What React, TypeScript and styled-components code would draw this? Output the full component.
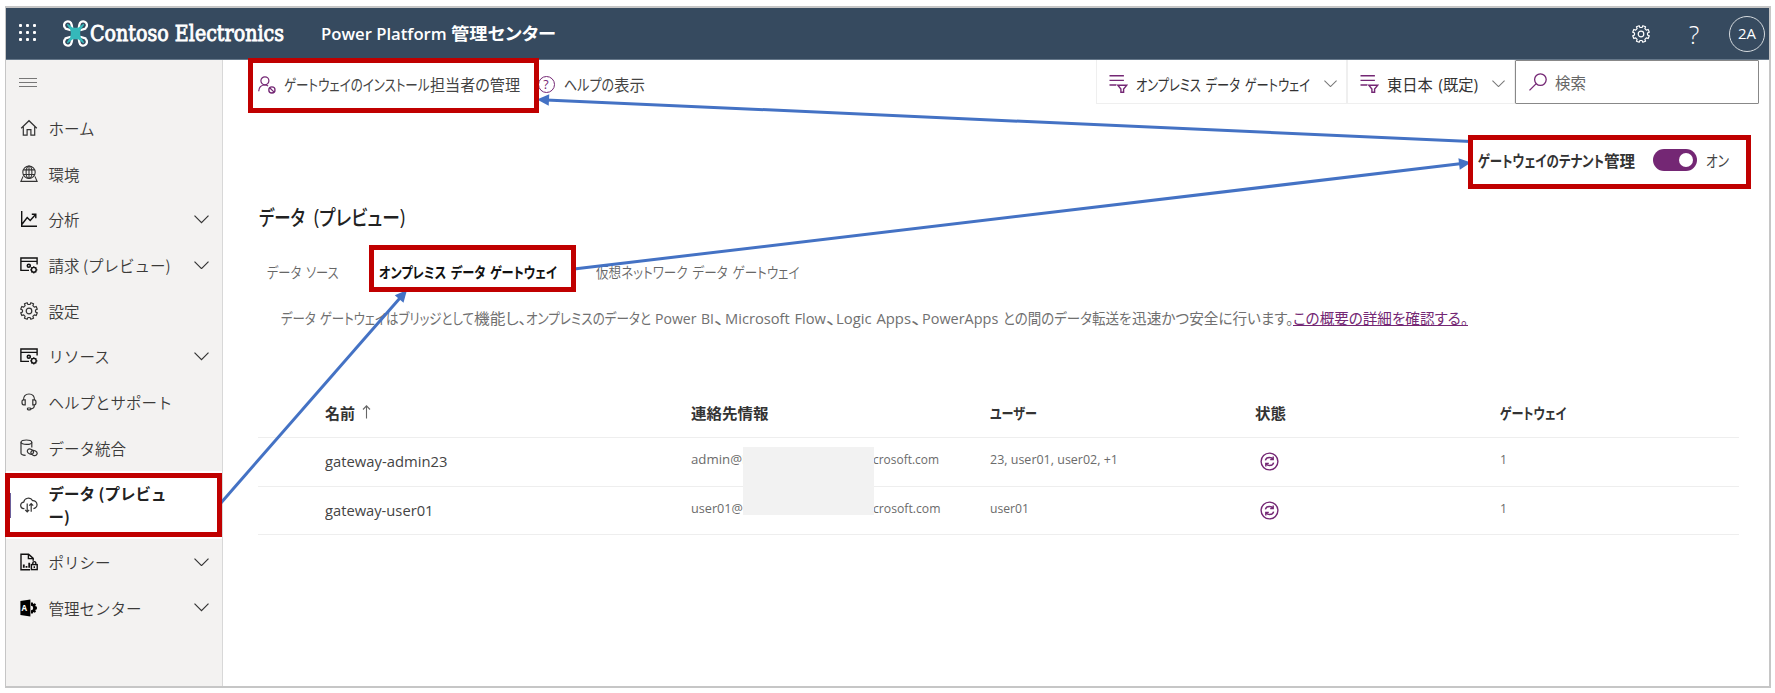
import React, { useLayoutEffect, useRef } from "react";
import styled, { createGlobalStyle, css } from "styled-components";

const Global = createGlobalStyle`
  *, *::before, *::after { box-sizing: border-box; }
  body {
    margin: 0;
    background: #fff;
    font-family: "Open Sans", "Noto Sans CJK JP", sans-serif;
    color: #444;
  }
  svg { display: block; flex: none; }
`;

const purple = "#742774";
const red = "#c00000";
const blue = "#4472c4";

/* ---------- text set to a given measure ---------- */

const FitOuter = styled.span<{ $w: number }>`
  display: inline-block;
  flex: none;
  width: ${(p) => p.$w}px;
  white-space: pre;
  font-feature-settings: "palt";
`;
const FitInner = styled.span`
  display: inline-block;
  transform-origin: 0 50%;
`;

function Fit({ w, children }: { w: number; children: string }) {
  const ref = useRef<HTMLSpanElement>(null);
  useLayoutEffect(() => {
    const fit = () => {
      const el = ref.current;
      if (!el) return;
      el.style.transform = "none";
      const natural = el.getBoundingClientRect().width;
      if (natural > 0) el.style.transform = `scaleX(${w / natural})`;
    };
    fit();
    document.fonts.ready.then(fit);
  }, [w, children]);
  return (
    <FitOuter $w={w}>
      <FitInner ref={ref}>{children}</FitInner>
    </FitOuter>
  );
}

/* ---------- icons ---------- */

const gearPath = (c: number, outer: number, inner: number, teeth = 8) => {
  const pts: string[] = [];
  const step = (Math.PI * 2) / teeth;
  for (let i = 0; i < teeth; i++) {
    const a = i * step - Math.PI / 2 + step / 2;
    [
      [-0.3, inner],
      [-0.22, outer],
      [0.22, outer],
      [0.3, inner],
    ].forEach(([o, r]) => {
      pts.push(`${(c + Math.cos(a + o * step) * r).toFixed(2)} ${(c + Math.sin(a + o * step) * r).toFixed(2)}`);
    });
  }
  return `M${pts.join("L")}Z`;
};

const Glyph = ({ children, size = 18, sw = 1.2, color = "#333" }: { children: React.ReactNode; size?: number; sw?: number; color?: string }) => (
  <svg width={size} height={size} viewBox="0 0 18 18" fill="none" stroke={color} strokeWidth={sw}>
    {children}
  </svg>
);

const Gear = ({ color, size }: { color?: string; size?: number }) => (
  <Glyph color={color} size={size}>
    <path d={gearPath(9, 8.5, 6.6)} strokeLinejoin="round" />
    <circle cx="9" cy="9" r="2.8" />
  </Glyph>
);

const HomeIcon = () => (
  <Glyph>
    <path d="M1.2 9.3 9 1.7l7.8 7.6M3.3 7.6v8.6h3.8v-5.6h3.8v5.6h3.8V7.6" />
  </Glyph>
);
const GlobeIcon = () => (
  <Glyph sw={1.1}>
    <circle cx="9" cy="7.2" r="6.2" />
    <ellipse cx="9" cy="7.2" rx="2.9" ry="6.2" />
    <path d="M3.4 4.9h11.2M3.4 9.5h11.2M3.1 11.4.9 16.4h16.2l-2.2-5M9 1v12.4" />
  </Glyph>
);
const ChartIcon = () => (
  <Glyph color="#111" sw={1.4}>
    <path d="M1.7 1v15.3H17M2 14.3l5.2-6.8 3 3 5.4-6M11.8 4.2h4v4" />
  </Glyph>
);
const WindowGearIcon = () => (
  <Glyph color="#111" sw={1.4}>
    <path d="M9 14.4H.9V2h16.2v6.6M.9 5.4h16.2" />
    <circle cx="8.8" cy="9.8" r="1.5" strokeWidth="1.6" />
    <circle cx="13.8" cy="13.8" r="2.4" strokeWidth="1.4" />
    <path d="M13.8 10.3v1.2M13.8 16.2v1.2M10.3 13.8h1.2M16.2 13.8h1.2M11.3 11.3l.9.9M15.4 15.4l.9.9M16.3 11.3l-.9.9M12.2 15.4l-.9.9" strokeWidth="1.2" />
  </Glyph>
);
const HeadsetIcon = () => (
  <Glyph>
    <path d="M3.4 7.4C3.4 3.4 5.4 1 9 1s5.6 2.4 5.6 6.4M5.2 6.8H3.6c-1.2 0-1.6.8-1.6 2.4s.4 2.6 1.6 2.6h1.6zM12.8 6.8h1.6c1.2 0 1.6.8 1.6 2.4s-.4 2.6-1.6 2.6h-1.6zM14.4 11.8c0 2.8-1.2 4-3.6 4" />
    <rect x="7.4" y="15" width="3.4" height="1.8" rx=".8" />
  </Glyph>
);
const DbLinkIcon = () => (
  <Glyph>
    <ellipse cx="6.4" cy="3.2" rx="5.4" ry="2.2" />
    <path d="M1 3.2v11c0 1.1 1.9 1.9 4.6 2.1M11.8 3.2v5.2" />
    <ellipse cx="10.4" cy="12.6" rx="3.2" ry="2.4" transform="rotate(25 10.4 12.6)" />
    <ellipse cx="14" cy="14" rx="3.2" ry="2.4" transform="rotate(25 14 14)" />
  </Glyph>
);
const CloudIcon = () => (
  <Glyph>
    <path d="M4.4 12.6H4A3.2 3.2 0 0 1 3.7 6.2 4.8 4.8 0 0 1 12.6 4.6 4 4 0 1 1 13.4 12.6" />
    <path d="M7.2 7.4v8.4M5.2 13.8l2 2 2-2M11.2 15.8V7.6M9.2 9.6l2-2 2 2" />
  </Glyph>
);
const PolicyIcon = () => (
  <Glyph color="#111" sw={1.4}>
    <path d="M10 16.8H1V1.2h7.6l4.6 4.2v2.4M8.4 1.4v4.2h4.6" />
    <path d="M3.8 11.6v3.2M6.5 13v1.8M9.2 9.8v5" strokeWidth="1.8" />
    <rect x="11.4" y="11.6" width="5.8" height="5" />
    <path d="M12.8 11.4v-1.3a1.5 1.5 0 0 1 3 0v1.3M14.3 13.2v1.8" />
  </Glyph>
);
const AdminBadge = styled.span`
  position: relative;
  display: flex;
  align-items: center;
  width: 18px;
  height: 18px;
`;
const AdminLetter = styled.span`
  position: absolute;
  left: 2px;
  top: 4px;
  color: #fff;
  font: 700 8px/10px "Open Sans", sans-serif;
`;
const AdminIcon = () => (
  <AdminBadge>
    <svg width="18" height="18" viewBox="0 0 18 18">
      <path d="M.4 2 10.4.6v17L.4 16Z" fill="#000" />
      <path d="M11 3.4h1.8l.4 1.6 1.6-.8 1.2 1.2-.8 1.6 1.7.7v2.6l-1.7.7.8 1.6-1.2 1.2-1.6-.8-.4 1.6H11v-3.4a2.2 2.2 0 0 0 0-4.4Z" fill="#000" />
    </svg>
    <AdminLetter>A</AdminLetter>
  </AdminBadge>
);
const Chevron = ({ w = 15, color = "#333" }: { w?: number; color?: string }) => (
  <svg width={w} height={w * 0.58} viewBox="0 0 15 8.7" fill="none" stroke={color} strokeWidth="1.2">
    <path d="M.5.6l7 7 7-7" />
  </svg>
);
const PersonBlockIcon = () => (
  <Glyph color={purple} sw={1.2}>
    <circle cx="6.9" cy="4.8" r="4" />
    <path d="M.7 15.2c.2-3.6 2.6-6.2 6.2-6.2 1.4 0 2.4.4 3.2.9" />
    <circle cx="13.9" cy="13.9" r="3.1" strokeWidth="1.3" />
    <path d="m11.7 11.7 4.4 4.4" strokeWidth="1.3" />
  </Glyph>
);
const FilterIcon = () => (
  <svg width="19" height="20" viewBox="0 0 19 20" fill="none" stroke={purple} strokeWidth="1.4">
    <path d="M.5 1.8h14.4M.5 6.4h14.4M.5 11h6.8M8.8 11.2h9L14.6 15v3.2h-2.7V15Z" />
  </svg>
);
const SearchIcon = () => (
  <Glyph color={purple} sw={1.3}>
    <circle cx="11.4" cy="6.6" r="5.8" />
    <path d="M7.2 10.6.5 17.4" />
  </Glyph>
);
const SyncIcon = () => (
  <svg width="19" height="19" viewBox="0 0 19 19" fill="none" stroke={purple} strokeWidth="1.4">
    <circle cx="9.5" cy="9.5" r="8.4" />
    <path d="M5.4 8.4c.4-1.8 2-2.9 4-2.9 1.5 0 2.7.6 3.4 1.6M13.6 10.6c-.4 1.8-2 2.9-4 2.9-1.5 0-2.7-.6-3.4-1.6M13.2 4.6v3h-3M5.8 14.4v-3h3" />
  </svg>
);
const DroneLogo = () => (
  <svg width="25" height="27" viewBox="0 0 25 27" fill="none">
    <g stroke="#fff" strokeWidth="2.3" strokeLinecap="round">
      <path d="M1.9 7.6A3.8 3.8 0 1 1 8.6 4.6L9.4 9M2.6 8.6 7 10" />
      <path d="M23.1 7.6A3.8 3.8 0 1 0 16.4 4.6L15.6 9M22.4 8.6 18 10" />
      <path d="M1.9 19.4A3.8 3.8 0 1 0 8.6 22.4L9.4 18M2.6 18.4 7 17" />
      <path d="M23.1 19.4A3.8 3.8 0 1 1 16.4 22.4L15.6 18M22.4 18.4 18 17" />
    </g>
    <path
      d="M4.6 4.6 9.4 8.4h6.2l4.8-3.8-3.4 5c-.8 2.4-.8 5.4 0 7.8l3.4 5-4.8-3.8H9.4l-4.8 3.8 3.4-5c.8-2.4.8-5.4 0-7.8Z"
      fill="#35b8ba" stroke="#35b8ba" strokeWidth="1.4" strokeLinejoin="round"
    />
  </svg>
);

/* ---------- shell ---------- */

const Page = styled.div`
  position: relative;
  width: 1775px;
  height: 693px;
  padding: 6px 4px 5px 5px;
  overflow: hidden;
`;
const Frame = styled.div`
  display: flex;
  flex-direction: column;
  height: 682px;
  border: 2px solid #c6c6c6;
  border-left-width: 1px;
`;
const Header = styled.header`
  display: flex;
  align-items: center;
  flex: none;
  height: 52px;
  padding: 0 4px 0 13px;
  background: #364a5f;
  border-bottom: 1px solid #66788a;
  color: #fff;
`;
const Waffle = styled.div`
  display: grid;
  grid-template-columns: repeat(3, 3px);
  gap: 4px;
  margin: 0 27px 2px 0;
`;
const Dot = styled.i`
  width: 3px;
  height: 3px;
  border-radius: 1px;
  background: #fff;
`;
const Brand = styled.div`
  margin-left: 2px;
  padding-top: 1px;
  font: 400 22px/30px "DejaVu Serif", serif;
  -webkit-text-stroke: 0.9px #fff;
`;
const Product = styled.div`
  margin: 0 auto 0 37px;
  font-size: 17px;
  line-height: 24px;
  font-weight: 600;
`;
const HelpMark = styled.span`
  width: 12px;
  margin: 0 29px 0 38px;
  font: 300 25px/28px "Open Sans", sans-serif;
  text-align: center;
`;
const Avatar = styled.div`
  display: grid;
  flex: none;
  place-items: center;
  width: 36px;
  height: 36px;
  border: 1px solid #d5dade;
  border-radius: 50%;
  font-size: 14px;
`;
const Body = styled.div`
  display: flex;
  flex: 1;
`;
const Sidebar = styled.nav`
  flex: none;
  width: 217px;
  background: #f3f2f1;
  border-right: 1px solid #d8d8d8;
`;
const Burger = styled.div`
  display: flex;
  flex-direction: column;
  justify-content: space-between;
  width: 18px;
  height: 9px;
  margin: 18px 0 18px 13px;
`;
const Bar = styled.i`
  height: 1px;
  background: #777;
`;
const Item = styled.div<{ $active?: boolean }>`
  display: flex;
  align-items: center;
  height: ${(p) => (p.$active ? 68.6 : 45.7)}px;
  padding: 0 13px 0 13.5px;
  font-family: "Noto Sans CJK JP", sans-serif;
  font-size: 15.5px;
  line-height: 23px;
  font-weight: 350;
  color: #3b3a39;
  ${(p) =>
    p.$active &&
    css`
      background: #fff;
      font-weight: 600;
      color: #222;
    `}
`;
const ItemLabel = styled.span`
  width: 130px;
  margin: 1px auto 0 11px;
`;
const ActiveLabel = styled(ItemLabel)`
  width: 122px;
  word-break: break-all;
  line-break: anywhere;
`;

const Main = styled.main`
  flex: 1;
  padding-left: 35px;
`;
const Toolbar = styled.div`
  display: flex;
  height: 44px;
  padding-right: 10px;
  font-size: 15.5px;
`;
const Command = styled.div<{ $gap: number; $mr: number }>`
  display: flex;
  align-items: center;
  gap: ${(p) => p.$gap}px;
  margin-right: ${(p) => p.$mr}px;
  padding-top: 5px;
`;
const Runs = styled.span`
  display: flex;
`;
const HelpCircle = styled.span`
  display: grid;
  place-items: center;
  width: 17px;
  height: 17px;
  border: 1px solid ${purple};
  border-radius: 50%;
  color: ${purple};
  font-size: 12.5px;
  line-height: 14px;
`;
const Dropdown = styled.div<{ $w: number; $push?: boolean }>`
  display: flex;
  align-items: center;
  width: ${(p) => p.$w}px;
  height: 44px;
  margin-left: ${(p) => (p.$push ? "auto" : "0")};
  padding: 4px 9px 0 12px;
  border: 1px solid #efefef;
  border-top: 0;
  color: #333;
`;
const DropLabel = styled.span`
  margin: 2px auto 0 8px;
  word-spacing: 2px;
`;
const SearchBox = styled.div`
  display: flex;
  align-items: center;
  gap: 8px;
  width: 244px;
  padding: 0 13px 0 13px;
  border: 1px solid #888;
  border-radius: 1px;
  color: #666;
`;
const TenantRow = styled.div`
  display: flex;
  align-items: center;
  justify-content: flex-end;
  height: 24px;
  margin-top: 44px;
  padding-right: 40px;
  font-size: 15.5px;
`;
const TenantLabel = styled.span`
  font-weight: 600;
  color: #333;
  margin-right: 18px;
`;
const Toggle = styled.span`
  display: flex;
  align-items: center;
  justify-content: flex-end;
  width: 44px;
  height: 22px;
  margin-right: 9px;
  padding-right: 4px;
  border-radius: 11px;
  background: ${purple};
`;
const Knob = styled.i`
  width: 14px;
  height: 14px;
  border-radius: 50%;
  background: #fff;
`;
const Title = styled.h1`
  display: flex;
  gap: 9px;
  margin: 31px 0 0 1px;
  font-size: 21px;
  line-height: 28px;
  font-weight: 500;
  color: #222;
`;
const Tabs = styled.div`
  display: flex;
  margin: 30px 0 0 9px;
  font-size: 14.8px;
  line-height: 22px;
  word-spacing: 2px;
`;
const Tab = styled.span<{ $active?: boolean }>`
  margin-right: ${(p) => (p.$active ? 39 : 40)}px;
  color: ${(p) => (p.$active ? "#111" : "#666")};
  font-weight: ${(p) => (p.$active ? 700 : 350)};
`;
const Description = styled.p`
  display: flex;
  margin: 24px 0 0 22.5px;
  font-size: 15.2px;
  line-height: 22px;
  font-weight: 400;
  word-spacing: 1px;
  color: #707070;
`;
const Link = styled.a`
  height: 19px;
  border-bottom: 1px solid ${purple};
  color: ${purple};
`;
const Table = styled.div`
  width: 1481px;
  margin-top: 61px;
`;
const Row = styled.div<{ $head?: boolean }>`
  display: grid;
  grid-template-columns: 365.5px 299px 261.5px 248.5px 1fr;
  align-items: center;
  height: ${(p) => (p.$head ? 48 : 48.7)}px;
  padding-left: 67px;
  padding-bottom: ${(p) => (p.$head ? 3 : 1)}px;
  border-bottom: 1px solid #eee;
  font-size: ${(p) => (p.$head ? 15.2 : 13)}px;
  font-weight: ${(p) => (p.$head ? 600 : 400)};
  color: ${(p) => (p.$head ? "#333" : "#6b6b6b")};
`;
const Cell = styled.div<{ $name?: boolean; $lift?: boolean; $pad?: number }>`
  display: flex;
  align-items: center;
  padding-left: ${(p) => p.$pad ?? 0}px;
  padding-bottom: ${(p) => (p.$lift ? 4 : 0)}px;
  ${(p) => p.$name && css`font-size: 15.2px; color: #444;`}
`;
const Gap = styled.span<{ $w: number }>`
  flex: none;
  width: ${(p) => p.$w}px;
`;

/* ---------- annotations over the page ---------- */

const Callout = styled.div<{ $x: number; $y: number; $w: number; $h: number }>`
  position: absolute;
  left: ${(p) => p.$x}px;
  top: ${(p) => p.$y}px;
  width: ${(p) => p.$w}px;
  height: ${(p) => p.$h}px;
  border: 5px solid ${red};
`;
const Redaction = styled.div`
  position: absolute;
  left: 743px;
  top: 447px;
  width: 131px;
  height: 68px;
  background: #f2f2f2;
`;
const ActiveMark = styled.div`
  position: absolute;
  left: 10px;
  top: 493px;
  width: 1px;
  height: 25px;
  background: #6b5f9a;
`;
const ArrowLayer = styled.svg`
  position: absolute;
  inset: 0;
`;

const arrows = [
  [220, 504, 407, 290],
  [574, 269, 1471, 162.5],
  [1471, 141.5, 537, 99.5],
];

function Arrow({ p }: { p: number[] }) {
  const [x1, y1, x2, y2] = p;
  const len = Math.hypot(x2 - x1, y2 - y1);
  const ang = (Math.atan2(y2 - y1, x2 - x1) * 180) / Math.PI;
  return (
    <g transform={`translate(${x1} ${y1}) rotate(${ang})`}>
      <path d={`M0 0H${len - 9}`} stroke={blue} strokeWidth="3" />
      <path d={`M${len} 0l-12-5.8v11.6Z`} fill={blue} />
    </g>
  );
}

const nav: { icon: React.ReactNode; label: string; more?: boolean; active?: boolean }[] = [
  { icon: <HomeIcon />, label: "ホーム" },
  { icon: <GlobeIcon />, label: "環境" },
  { icon: <ChartIcon />, label: "分析", more: true },
  { icon: <WindowGearIcon />, label: "請求 (プレビュー)", more: true },
  { icon: <Gear />, label: "設定" },
  { icon: <WindowGearIcon />, label: "リソース", more: true },
  { icon: <HeadsetIcon />, label: "ヘルプとサポート" },
  { icon: <DbLinkIcon />, label: "データ統合" },
  { icon: <CloudIcon />, label: "データ (プレビュー)", active: true },
  { icon: <PolicyIcon />, label: "ポリシー", more: true },
  { icon: <AdminIcon />, label: "管理センター", more: true },
];

const rows = [
  { name: "gateway-admin23", nameW: 122.5, user: "admin@M", userW: 63, tail: 66, users: "23, user01, user02, +1", usersW: 128 },
  { name: "gateway-user01", nameW: 108.5, user: "user01@", userW: 52, tail: 67.5, users: "user01", usersW: 39 },
];

export default function App() {
  return (
    <Page>
      <Global />
      <Frame>
        <Header>
          <Waffle>
            {Array.from({ length: 9 }, (_, i) => (
              <Dot key={i} />
            ))}
          </Waffle>
          <DroneLogo />
          <Brand>
            <Fit w={194}>Contoso Electronics</Fit>
          </Brand>
          <Product>
            <Fit w={130}>Power Platform </Fit>
            <Fit w={105}>管理センター</Fit>
          </Product>
          <Gear color="#fff" />
          <HelpMark>?</HelpMark>
          <Avatar>
            <Fit w={18}>2A</Fit>
          </Avatar>
        </Header>
        <Body>
          <Sidebar>
            <Burger>
              <Bar />
              <Bar />
              <Bar />
            </Burger>
            {nav.map((n) => (
              <Item key={n.label} $active={n.active}>
                {n.icon}
                {n.active ? <ActiveLabel>{n.label}</ActiveLabel> : <ItemLabel>{n.label}</ItemLabel>}
                {n.more && <Chevron />}
              </Item>
            ))}
          </Sidebar>
          <Main>
            <Toolbar>
              <Command $gap={8} $mr={18}>
                <PersonBlockIcon />
                <Runs>
                  <Fit w={145.5}>ゲートウェイのインストール</Fit>
                  <Fit w={90}>担当者の管理</Fit>
                </Runs>
              </Command>
              <Command $gap={9} $mr={0}>
                <HelpCircle>?</HelpCircle>
                <Runs>
                  <Fit w={50}>ヘルプの</Fit>
                  <Fit w={31}>表示</Fit>
                </Runs>
              </Command>
              <Dropdown $w={251} $push>
                <FilterIcon />
                <DropLabel>
                  <Fit w={174}>オンプレミス データ ゲートウェイ</Fit>
                </DropLabel>
                <Chevron w={13} color="#777" />
              </Dropdown>
              <Dropdown $w={168}>
                <FilterIcon />
                <DropLabel>
                  <Fit w={91}>東日本 (既定)</Fit>
                </DropLabel>
                <Chevron w={13} color="#777" />
              </Dropdown>
              <SearchBox>
                <SearchIcon />
                <Fit w={31}>検索</Fit>
              </SearchBox>
            </Toolbar>
            <TenantRow>
              <TenantLabel>
                <Fit w={126}>ゲートウェイのテナント</Fit>
                <Fit w={31}>管理</Fit>
              </TenantLabel>
              <Toggle>
                <Knob />
              </Toggle>
              <Fit w={23}>オン</Fit>
            </TenantRow>
            <Title>
              <Fit w={46}>データ</Fit>
              <Fit w={91}>(プレビュー)</Fit>
            </Title>
            <Tabs>
              <Tab>
                <Fit w={71.5}>データ ソース</Fit>
              </Tab>
              <Tab $active>
                <Fit w={178}>オンプレミス データ ゲートウェイ</Fit>
              </Tab>
              <Tab>
                <Fit w={203.5}>仮想ネットワーク データ ゲートウェイ</Fit>
              </Tab>
            </Tabs>
            <Description>
              <Fit w={193}>データ ゲートウェイはブリッジとして</Fit>
              <Fit w={52.5}>機能し、</Fit>
              <Fit w={129}>オンプレミスのデータと </Fit>
              <Fit w={59}>Power BI</Fit>
              <Fit w={10.5}>、</Fit>
              <Fit w={101}>Microsoft Flow</Fit>
              <Fit w={10.5}>、</Fit>
              <Fit w={75}>Logic Apps</Fit>
              <Fit w={11}>、</Fit>
              <Fit w={81}>PowerApps </Fit>
              <Fit w={128.5}>との間のデータ転送を</Fit>
              <Fit w={161.5}>迅速かつ安全に行います。</Fit>
              <Link>
                <Fit w={175}>この概要の詳細を確認する。</Fit>
              </Link>
            </Description>
            <Table>
              <Row $head>
                <Cell>
                  <Fit w={30}>名前</Fit>
                  <Gap $w={7} />
                  <svg width="9" height="14" viewBox="0 0 9 14" fill="none" stroke="#666" strokeWidth="1.1">
                    <path d="M4.5 13.5V1M1 4.5l3.5-3.6L8 4.5" />
                  </svg>
                </Cell>
                <Cell>
                  <Fit w={77.5}>連絡先情報</Fit>
                </Cell>
                <Cell>
                  <Fit w={47}>ユーザー</Fit>
                </Cell>
                <Cell $pad={4}>
                  <Fit w={31}>状態</Fit>
                </Cell>
                <Cell>
                  <Fit w={66.5}>ゲートウェイ</Fit>
                </Cell>
              </Row>
              {rows.map((r) => (
                <Row key={r.name}>
                  <Cell $name>
                    <Fit w={r.nameW}>{r.name}</Fit>
                  </Cell>
                  <Cell $lift>
                    <Fit w={r.userW}>{r.user}</Fit>
                    <Gap $w={182 - r.userW} />
                    <Fit w={r.tail}>crosoft.com</Fit>
                  </Cell>
                  <Cell $lift>
                    <Fit w={r.usersW}>{r.users}</Fit>
                  </Cell>
                  <Cell $pad={9}>
                    <SyncIcon />
                  </Cell>
                  <Cell $lift>
                    <Fit w={7}>1</Fit>
                  </Cell>
                </Row>
              ))}
            </Table>
          </Main>
        </Body>
      </Frame>
      <Redaction />
      <ActiveMark />
      <ArrowLayer width="1775" height="693">
        {arrows.map((p, i) => (
          <Arrow key={i} p={p} />
        ))}
      </ArrowLayer>
      <Callout $x={248} $y={58} $w={291} $h={55} />
      <Callout $x={1468} $y={135} $w={283} $h={54} />
      <Callout $x={369} $y={245} $w={207} $h={47} />
      <Callout $x={5} $y={473} $w={217} $h={64} />
    </Page>
  );
}
